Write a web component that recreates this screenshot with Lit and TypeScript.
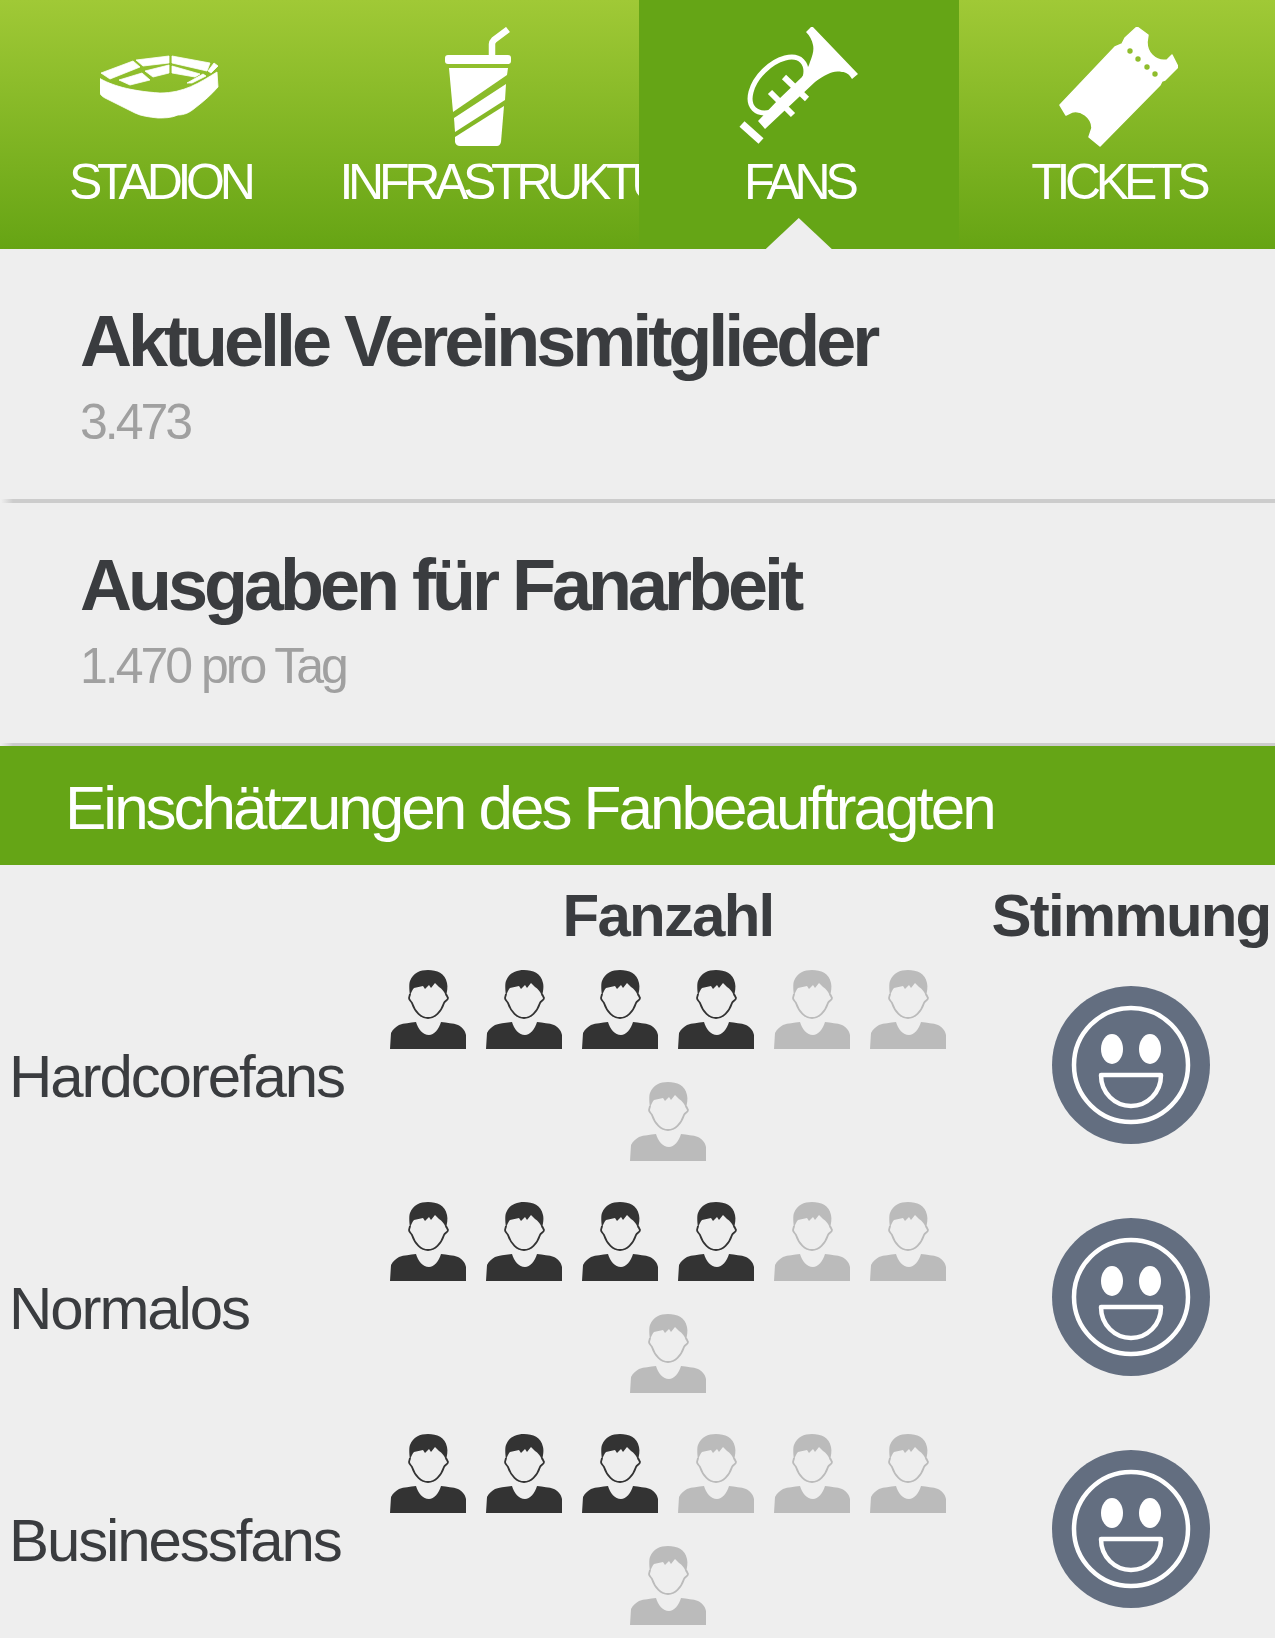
import { LitElement, html, css } from "lit";
import { customElement } from "lit/decorators.js";

const stadium = html`<svg class="ico" viewBox="1 0 120 120"><g fill="#fff" stroke="#fff" stroke-width=".8" stroke-linejoin="round">
<path d="M0 51C12 58 30 64 61 66C85 66 100 56 118 45L119 60C112 68 105 74 96 81C90 86 85 88 79 88C72 91 65 91 59 91C50 90 42 89 36 86L6 71C2 69 0 66 0 63Z"/>
<path d="M2 46L34 34L41 40L11 52Z"/><path d="M37 33L70 29V36L44 39Z"/><path d="M73 29L111 36L108 44L73 36Z"/><path d="M109 44L115 36L119 39L112 46Z"/>
<path d="M20 53L43 46L51 53L31 58Z"/><path d="M46 44L70 38V46L54 50Z"/><path d="M73 39L101 47L96 50L73 46Z"/><path d="M88 56L104 47L107 49L93 56Z"/>
</g></svg>`;

const cup = html`<svg class="ico" viewBox="419 27 120 120">
<path d="M492 56V44Q492 42 494 40L508 29.500" fill="none" stroke="#fff" stroke-width="6.500"/>
<rect x="445" y="55" width="66" height="9" rx="3" fill="#fff"/>
<g fill="#fff">
<path d="M449 68H508L507 75L453 112Z"/>
<path d="M454 118L506 84L505 100L455 132Z"/>
<path d="M455 137L504 106L501 142Q500 146 497 146H460Q456 146 455 142Z"/>
</g></svg>`;

const horn = html`<svg class="ico" viewBox="739 27 120 120">
<path fill="#fff" d="M806 32L812 26L858 74L852 79C849 74 846 72 842 72C836 71 832 72 828 74C823 76 819 79 815 82L765 129L758 121L778 100L802 77C806 71 809 66 810 62C813 54 814 50 813 45C812 40 810 36 806 32Z"/>
<ellipse cx="778" cy="85" rx="34" ry="20" transform="rotate(-45 778 85)" fill="none" stroke="#fff" stroke-width="5"/>
<path d="M784 77L807 99M770 92L793 115" stroke="#fff" stroke-width="6" fill="none"/>
<path d="M742 124L761 141" stroke="#fff" stroke-width="7.500" fill="none"/>
</svg>`;

const ticket = html`<svg class="ico" viewBox="1058 27 120 120">
<path fill="#fff" stroke="#fff" stroke-width="1.500" stroke-linejoin="round" d="M1137 27L1148 35L1147 42C1147 49 1149 52 1152 55C1157 60 1162 61 1167 60L1172 55L1178 67L1165 80L1162 81L1160 85L1100 146L1089 137L1092 128C1092 122 1089 118 1085 115C1081 112 1076 111 1072 112L1066 115L1060 105L1115 47L1122 44L1125 38Z"/>
<g fill="#8fbd2c"><circle cx="1130" cy="51" r="2.700"/><circle cx="1138" cy="59" r="2.700"/><circle cx="1147" cy="67" r="2.700"/><circle cx="1155" cy="74" r="2.700"/></g>
</svg>`;

const person = (on: boolean) => html`<div class="slot"><svg class=${on ? "p on" : "p"} viewBox="0 0 76 80">
<path class="f" d="M20 27C19 20 19 14 20 12C23 4 30 1 38 1C47 1 55 4 57 14C58 18 57 23 56 27C54 22 52 20 49 18L45 14L41 19L39 16L35 20L33 17C30 18 27 18 24 19C22 21 21 24 20 27Z"/>
<path class="l" d="M20 25L19 29C19 31 21 32 22 34C25 43 31 49 38 49C45 49 51 43 54 34C55 32 58 31 58 29L56 25"/>
<path class="f" d="M0 80L1 64C3 60 6 58 9 56C14 54 20 54 26 53C28 60 33 66 39 66C44 66 49 60 51 53C57 54 63 54 68 56C72 58 75 61 76 66L76.500 80Z"/>
</svg></div>`;

const smiley = html`<svg class="smiley" viewBox="-79 -79 158 158">
<circle r="79" fill="#636e80"/>
<circle r="57" fill="none" stroke="#fff" stroke-width="4.500"/>
<ellipse cx="-19" cy="-16" rx="11" ry="15" fill="#fff"/><ellipse cx="19" cy="-16" rx="11" ry="15" fill="#fff"/>
<path d="M-30 10H30C30 28 16 41 0 41C-16 41 -30 28 -30 10Z" fill="none" stroke="#fff" stroke-width="4.500" stroke-linejoin="round"/>
</svg>`;

const rows: [string, number][] = [["Hardcorefans", 4], ["Normalos", 4], ["Businessfans", 3]];
const tabs = [["STADION", stadium], ["INFRASTRUKTUR", cup], ["FANS", horn], ["TICKETS", ticket]] as const;

@customElement("app-root")
export class AppRoot extends LitElement {
  static styles = css`
    :host { display: block; width: 1275px; height: 1638px; overflow: hidden; background: #eee; font-family: "Liberation Sans", Arial, sans-serif; }
    .tabs { display: grid; grid-template-columns: repeat(4, 319.5px); height: 249px; background: linear-gradient(#a0c936, #66a414); }
    .tab { position: relative; overflow: hidden; padding: 27px 20px 0; text-align: center; color: #fff; white-space: nowrap; }
    .tab.active { background: #65a516; }
    .tab.active::after { content: ""; position: absolute; left: 50%; bottom: 0; width: 66px; height: 31px; margin-left: -33px; background: #eee; clip-path: polygon(50% 0, 100% 100%, 0 100%); }
    .ico { display: block; width: 120px; height: 120px; margin: 0 auto; }
    .lbl { font-size: 50px; line-height: 50px; letter-spacing: -5.300px; margin-top: 10px; }
    .list { padding-top: 10px; }
    .item { height: 240px; padding-left: 80px; border-bottom: 4px solid #ccc; border-image: linear-gradient(90deg, #eee 2px, #ccc 14px) 1; }
    .item:last-child { border-bottom-width: 3px; }
    .title { font-size: 72px; font-weight: 700; letter-spacing: -4px; color: #3a3c3f; line-height: 72px; padding-top: 46px; }
    .sub { font-size: 50px; letter-spacing: -3px; color: #a0a0a0; line-height: 50px; margin-top: 20px; }
    .banner { height: 119px; background: #65a516; color: #fff; font-size: 62px; letter-spacing: -3px; line-height: 123px; padding-left: 65px; }
    .grid { display: grid; grid-template-columns: 380px 576px 319px; }
    .head { font-size: 60px; font-weight: 700; letter-spacing: -1.800px; color: #3a3c3f; text-align: center; height: 95px; box-sizing: border-box; line-height: 70px; padding-top: 16px; white-space: nowrap; }
    .h3 { padding-left: 31px; }
    .name { font-size: 60px; letter-spacing: -2.100px; color: #3a3c3f; padding-left: 9px; display: flex; align-items: center; height: 232px; }
    .cell { display: flex; flex-wrap: wrap; justify-content: center; align-content: flex-start; height: 232px; }
    .slot { width: 96px; height: 112px; padding: 9px 10px 0; box-sizing: border-box; }
    .p { display: block; width: 76px; height: 80px; }
    .p .f { fill: #bbb; }
    .p .l { fill: none; stroke: #bbb; stroke-width: 1.800; }
    .p.on .f { fill: #333; }
    .p.on .l { stroke: #333; }
    .mood { padding: 26px 0 0 31px; height: 232px; display: flex; justify-content: center; align-items: flex-start; box-sizing: border-box; }
    .smiley { display: block; width: 158px; height: 158px; }
  `;

  render() {
    return html`
      <div class="tabs">
        ${tabs.map(([t, ic]) => html`<div class=${t === "FANS" ? "tab active" : "tab"}>${ic}<div class="lbl">${t}</div></div>`)}
      </div>
      <div class="list">
        <div class="item"><div class="title">Aktuelle Vereinsmitglieder</div><div class="sub">3.473</div></div>
        <div class="item"><div class="title">Ausgaben für Fanarbeit</div><div class="sub">1.470 pro Tag</div></div>
      </div>
      <div class="banner">Einschätzungen des Fanbeauftragten</div>
      <div class="grid">
        <div></div><div class="head">Fanzahl</div><div class="head h3">Stimmung</div>
        ${rows.map(([n, c]) => html`
          <div class="name">${n}</div>
          <div class="cell">${[0, 1, 2, 3, 4, 5, 6].map((i) => person(i < c))}</div>
          <div class="mood">${smiley}</div>`)}
      </div>
    `;
  }
}
